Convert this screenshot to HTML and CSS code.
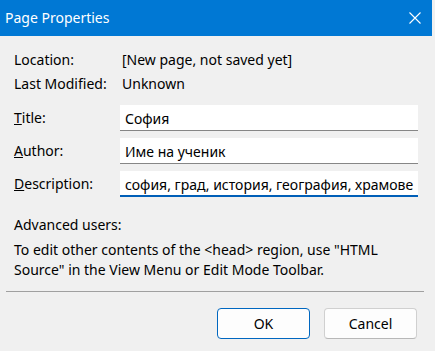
FILE: index.html
```html
<!DOCTYPE html>
<html lang="bg">
<head>
  <meta charset="UTF-8">
  <title>Page Properties</title>
  <link rel="stylesheet" href="styles.css">
</head>
<body>
  <div class="dialog">
    <!-- Title bar -->
    <div class="titlebar">
      <span class="caption">Page Properties</span>
      <svg class="close" width="12" height="12" viewBox="0 0 12 12">
        <path d="M0.5 0.5 L11.5 11.5 M11.5 0.5 L0.5 11.5" stroke="#fff" stroke-width="1.1" fill="none"/>
      </svg>
    </div>

    <div class="content">
      <div class="info">
        <span>Location:</span><span>[New page, not saved yet]</span>
        <span>Last Modified:</span><span>Unknown</span>
      </div>

      <div class="fields">
        <label class="label"><u>T</u>itle:</label>
        <div class="field">София</div>
        <label class="label"><u>A</u>uthor:</label>
        <div class="field">Име на ученик</div>
        <label class="label"><u>D</u>escription:</label>
        <div class="field focused">софия, град, история, география, храмове</div>
      </div>

      <p class="advanced">Advanced users:</p>
      <p class="note">To edit other contents of the &lt;head&gt; region, use "HTML Source" in the View Menu or Edit Mode Toolbar.</p>
    </div>

    <hr class="separator">

    <div class="buttons">
      <button class="btn default">OK</button>
      <button class="btn">Cancel</button>
    </div>
  </div>
</body>
</html>
```

FILE: styles.css
```css
body {
  margin: 0;
  padding: 0;
  background: #f0f0f0;
  font-family: 'Noto Sans', 'Open Sans', sans-serif;
  font-size: 14px;
  color: #000;
  width: 435px;
  height: 351px;
  overflow: hidden;
}
.dialog {
  width: 432px;
  height: 351px;
  background: #f0f0f0;
}

/* Title bar */
.titlebar {
  height: 36px;
  background: #0078d4;
  color: #fff;
  display: flex;
  align-items: center;
  justify-content: space-between;
  padding: 0 11px 0 5px;
  box-sizing: border-box;
}
.caption {
  font-size: 14px;
  line-height: 20px;
  margin-top: -1px;
}
.close {
  display: block;
  margin-top: -1px;
}

.content {
  padding: 12px 14px 0 14px;
}
.info {
  display: grid;
  grid-template-columns: 108px auto;
  line-height: 24px;
}

/* Text fields */
.fields {
  display: grid;
  grid-template-columns: 106px 298px;
  row-gap: 7px;
  margin-top: 9px;
  align-items: center;
}
.label {
  line-height: 26px;
}
.field {
  height: 26px;
  box-sizing: border-box;
  background: #fff;
  border-bottom: 1px solid #868686;
  padding: 2px 2px 0 5px;
  line-height: 23px;
  white-space: nowrap;
  overflow: hidden;
}
.field.focused {
  border-bottom: 2px solid #005fb8;
}

.advanced {
  margin: 18px 0 0 0;
  line-height: 20px;
}
.note {
  margin: 5px 0 0 0;
  line-height: 20px;
  width: 400px;
}

.separator {
  border: none;
  border-top: 1px solid #a0a0a0;
  margin: 11px 8px 0 6px;
  height: 0;
}

/* Buttons */
.buttons {
  display: flex;
  justify-content: flex-end;
  gap: 14px;
  padding: 16px 15px 0 0;
}
.btn {
  width: 93px;
  height: 31px;
  font-family: 'Noto Sans', 'Open Sans', sans-serif;
  font-size: 14px;
  color: #000;
  background: #fdfdfd;
  border: 1px solid #d0d0d0;
  border-bottom-color: #b8b8b8;
  border-radius: 4px;
  padding: 0;
}
.btn.default {
  border: 1px solid #0067c0;
  background: #fdfdfd;
}
```
